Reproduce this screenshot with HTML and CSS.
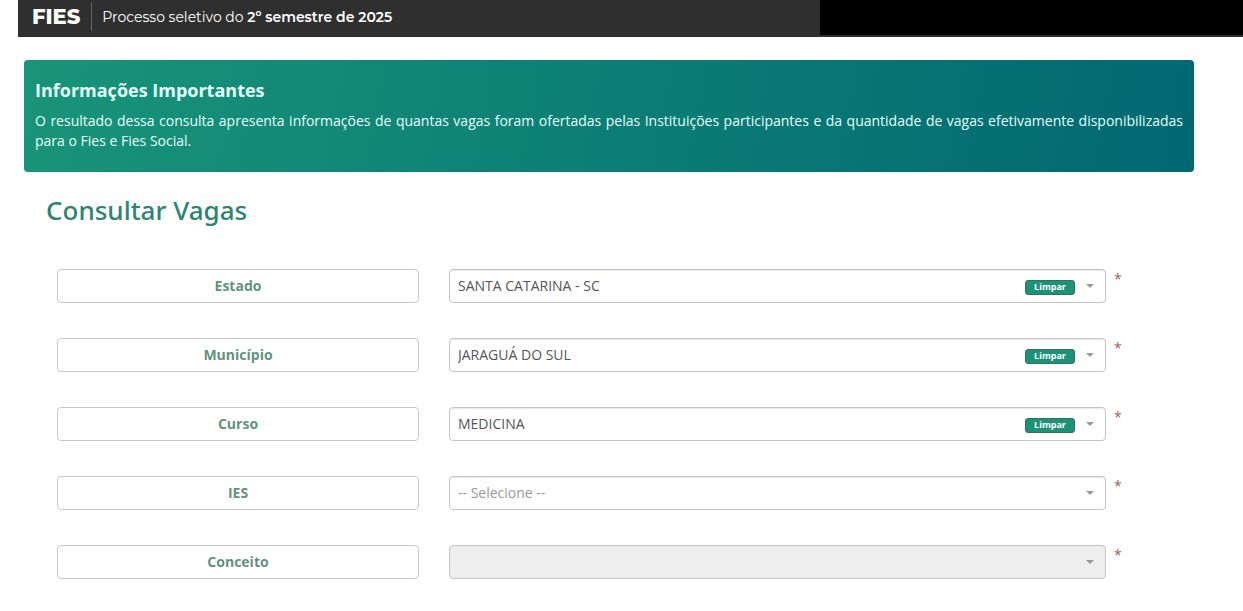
FILE: index.html
```html
<!DOCTYPE html>
<html lang="pt-BR">
<head>
<meta charset="utf-8">
<meta name="viewport" content="width=device-width, initial-scale=1">
<title>FIES - Consultar Vagas</title>
<link rel="stylesheet" href="styles.css">
</head>
<body>
<header class="topbar">
  <div class="brand">
    <strong class="brand-name">FIES</strong>
    <span class="brand-text">Processo seletivo do <b>2º semestre de 2025</b></span>
  </div>
  <div class="topbar-panel"></div>
</header>
<main class="page">
  <section class="notice">
    <h2 class="notice-title">Informações Importantes</h2>
    <p class="notice-text">O resultado dessa consulta apresenta informações de quantas vagas foram ofertadas pelas Instituições participantes e da quantidade de vagas efetivamente disponibilizadas para o Fies e Fies Social.</p>
  </section>
  <h1 class="title">Consultar Vagas</h1>
  <form class="form">
    <div class="row">
      <label class="label" for="estado">Estado</label>
      <div class="field">
        <select class="select" id="estado"><option>SANTA CATARINA - SC</option></select>
        <button class="clear" type="button">Limpar</button>
        <svg class="caret" viewBox="0 0 8 4" aria-hidden="true"><path d="M0 0h8L4 4z"/></svg>
      </div>
      <span class="required">*</span>
    </div>
    <div class="row">
      <label class="label" for="municipio">Município</label>
      <div class="field">
        <select class="select" id="municipio"><option>JARAGUÁ DO SUL</option></select>
        <button class="clear" type="button">Limpar</button>
        <svg class="caret" viewBox="0 0 8 4" aria-hidden="true"><path d="M0 0h8L4 4z"/></svg>
      </div>
      <span class="required">*</span>
    </div>
    <div class="row">
      <label class="label" for="curso">Curso</label>
      <div class="field">
        <select class="select" id="curso"><option>MEDICINA</option></select>
        <button class="clear" type="button">Limpar</button>
        <svg class="caret" viewBox="0 0 8 4" aria-hidden="true"><path d="M0 0h8L4 4z"/></svg>
      </div>
      <span class="required">*</span>
    </div>
    <div class="row">
      <label class="label" for="ies">IES</label>
      <div class="field">
        <select class="select select-empty" id="ies"><option>-- Selecione --</option></select>
        <svg class="caret" viewBox="0 0 8 4" aria-hidden="true"><path d="M0 0h8L4 4z"/></svg>
      </div>
      <span class="required">*</span>
    </div>
    <div class="row">
      <label class="label" for="conceito">Conceito</label>
      <div class="field">
        <select class="select" id="conceito" disabled></select>
        <svg class="caret" viewBox="0 0 8 4" aria-hidden="true"><path d="M0 0h8L4 4z"/></svg>
      </div>
      <span class="required">*</span>
    </div>
  </form>
</main>
</body>
</html>
```
FILE: styles.css
```css
* { box-sizing: border-box; }

body {
  margin: 0;
  background: #fff;
  color: #555;
  font-family: "Open Sans", "Noto Sans", sans-serif;
  font-size: 14px;
  line-height: 20px;
}

.topbar {
  display: grid;
  grid-template-columns: 802fr 423fr;
  margin-left: 18px;
  height: 37px;
  padding-bottom: 2px;
  background: #2f2f2f;
  color: #fff;
  font-family: Montserrat, Inter, sans-serif;
}

.topbar-panel { background: #000; }

.brand {
  display: flex;
  align-items: center;
  padding: 0 0 2px 14px;
  white-space: nowrap;
}

.brand-name {
  padding-right: 11px;
  font-size: 21px;
  font-weight: 800;
}

.brand-text {
  padding: 4px 0 4px 10px;
  border-left: 1px solid #666;
}

.brand-text b { font-weight: 600; }

.page {
  padding: 23px 49px 24px 24px;
}

.notice {
  padding: 20px 11px 21px;
  border-radius: 4px;
  background: linear-gradient(100deg, #199478, #006872);
  color: #e4fffa;
}

.notice-title {
  margin: 0;
  font-size: 18px;
  line-height: 20px;
  font-weight: 700;
}

.notice-text {
  margin: 11px 0 0;
  text-align: justify;
}

.title {
  margin: 20px 22px 0;
  color: #2b8570;
  font-family: "Noto Sans", "Open Sans", sans-serif;
  font-size: 26px;
  line-height: 36px;
  font-weight: 500;
}

.form {
  display: flex;
  flex-direction: column;
  gap: 35px;
  margin: 41px 33px 0;
}

.row {
  display: grid;
  grid-template-columns: 362fr 687fr 55fr;
}

.label {
  padding: 6px 12px;
  border: 1px solid #c8c8c8;
  border-radius: 4px;
  color: #60937f;
  font-weight: 700;
  text-align: center;
}

.field {
  position: relative;
  margin-left: 30px;
}

.select {
  display: block;
  width: 100%;
  height: 34px;
  padding: 0 8px;
  border: 1px solid #c4c4c4;
  border-radius: 4px;
  background: #fff;
  box-shadow: inset 0 1px 1px #e8e8e8;
  color: #555;
  font: inherit;
  appearance: none;
}

.select-empty { color: #999; }

.select:disabled {
  background: #eee;
  opacity: 1;
}

.clear {
  position: absolute;
  top: 11px;
  right: 31px;
  width: 50px;
  height: 15px;
  padding: 0 0 1px;
  border: 1px solid #376e5d;
  border-radius: 3px;
  background: #1c9278;
  color: #fff;
  font: 700 9px/12px "Open Sans", sans-serif;
}

.caret {
  position: absolute;
  top: 15px;
  right: 12px;
  width: 8px;
  height: 4px;
  fill: #999;
  pointer-events: none;
}

.required {
  padding-left: 8px;
  color: #a0605c;
}
```
